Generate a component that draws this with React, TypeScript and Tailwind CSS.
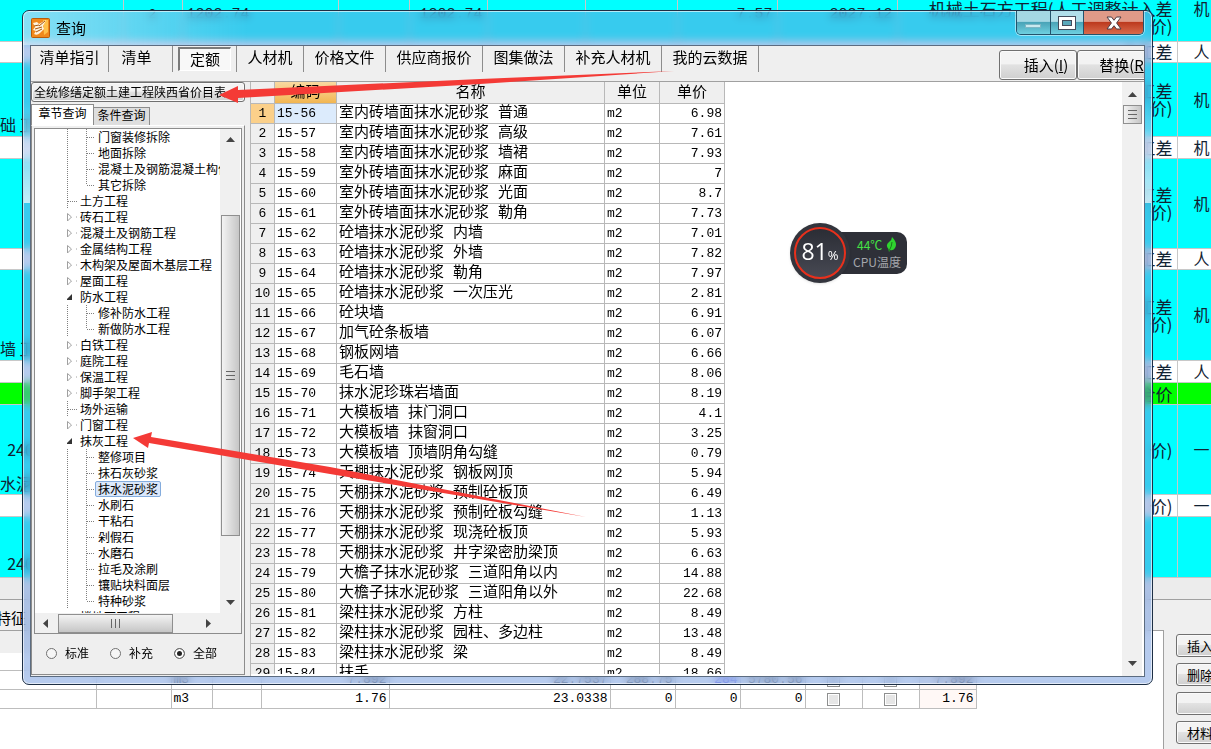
import { ReactNode } from "react";

interface GridRow {
  height: string;
  color: string;
  left?: string;
  note?: string;
  kind?: string;
}

const gridRows: GridRow[] = [
  { height: "h-[41px]", color: "bg-[#00ffff]", note: "机械土石方工程(人工调整计入差\n价)", kind: "机" },
  { height: "h-[21px]", color: "bg-white", note: "人工差", kind: "人" },
  { height: "h-[74px]", color: "bg-[#00ffff]", left: "\n\n\n础 卫", note: "人工差\n价)", kind: "机" },
  { height: "h-[22px]", color: "bg-white", note: "人工差", kind: "机" },
  { height: "h-[90px]", color: "bg-[#00ffff]", note: "人工差\n价)", kind: "机" },
  { height: "h-[21px]", color: "bg-white", note: "人工差", kind: "人" },
  { height: "h-[91px]", color: "bg-[#00ffff]", left: "\n\n\n\n墙 卫", note: "人工差\n价)", kind: "机" },
  { height: "h-[22px]", color: "bg-white", note: "人工差", kind: "人" },
  { height: "h-[22px]", color: "bg-[#00ff00]", note: "合价" },
  { height: "h-[90px]", color: "bg-[#00ffff]", left: "\n\n  240\n\n水泥砂浆", note: "价)", kind: "一" },
  { height: "h-[22px]", color: "bg-white", note: "价)", kind: "一" },
  { height: "h-[61px]", color: "bg-[#00ffff]", left: "\n\n  240" },
];

// only the first grid row shows above the dialog
const firstRow = ["2", "1202.74", "", "1202.74", "", "", "7.57", "2027.12"];

const quotas = [
  ["15-56", "室内砖墙面抹水泥砂浆 普通", "6.98"],
  ["15-57", "室内砖墙面抹水泥砂浆 高级", "7.61"],
  ["15-58", "室内砖墙面抹水泥砂浆 墙裙", "7.93"],
  ["15-59", "室外砖墙面抹水泥砂浆 麻面", "7"],
  ["15-60", "室外砖墙面抹水泥砂浆 光面", "8.7"],
  ["15-61", "室外砖墙面抹水泥砂浆 勒角", "7.73"],
  ["15-62", "砼墙抹水泥砂浆 内墙", "7.01"],
  ["15-63", "砼墙抹水泥砂浆 外墙", "7.82"],
  ["15-64", "砼墙抹水泥砂浆 勒角", "7.97"],
  ["15-65", "砼墙抹水泥砂浆 一次压光", "2.81"],
  ["15-66", "砼块墙", "6.91"],
  ["15-67", "加气砼条板墙", "6.07"],
  ["15-68", "钢板网墙", "6.66"],
  ["15-69", "毛石墙", "8.06"],
  ["15-70", "抹水泥珍珠岩墙面", "8.19"],
  ["15-71", "大模板墙 抹门洞口", "4.1"],
  ["15-72", "大模板墙 抹窗洞口", "3.25"],
  ["15-73", "大模板墙 顶墙阴角勾缝", "0.79"],
  ["15-74", "天棚抹水泥砂浆 钢板网顶", "5.94"],
  ["15-75", "天棚抹水泥砂浆 预制砼板顶", "6.49"],
  ["15-76", "天棚抹水泥砂浆 预制砼板勾缝", "1.13"],
  ["15-77", "天棚抹水泥砂浆 现浇砼板顶", "5.93"],
  ["15-78", "天棚抹水泥砂浆 井字梁密肋梁顶", "6.63"],
  ["15-79", "大檐子抹水泥砂浆 三道阳角以内", "14.88"],
  ["15-80", "大檐子抹水泥砂浆 三道阳角以外", "22.68"],
  ["15-81", "梁柱抹水泥砂浆 方柱", "8.49"],
  ["15-82", "梁柱抹水泥砂浆 园柱、多边柱", "13.48"],
  ["15-83", "梁柱抹水泥砂浆 梁", "8.49"],
  ["15-84", "扶手", "18.66"],
];

interface TreeItem {
  name: string;
  level: 1 | 2;
  state?: "open" | "closed";
  last?: boolean;
  selected?: boolean;
}

const tree: TreeItem[] = [
  { name: "门窗装修拆除", level: 2 },
  { name: "地面拆除", level: 2 },
  { name: "混凝土及钢筋混凝土构件拆除", level: 2 },
  { name: "其它拆除", level: 2, last: true },
  { name: "土方工程", level: 1 },
  { name: "砖石工程", level: 1, state: "closed" },
  { name: "混凝土及钢筋工程", level: 1, state: "closed" },
  { name: "金属结构工程", level: 1, state: "closed" },
  { name: "木构架及屋面木基层工程", level: 1, state: "closed" },
  { name: "屋面工程", level: 1, state: "closed" },
  { name: "防水工程", level: 1, state: "open" },
  { name: "修补防水工程", level: 2 },
  { name: "新做防水工程", level: 2, last: true },
  { name: "白铁工程", level: 1, state: "closed" },
  { name: "庭院工程", level: 1, state: "closed" },
  { name: "保温工程", level: 1, state: "closed" },
  { name: "脚手架工程", level: 1, state: "closed" },
  { name: "场外运输", level: 1 },
  { name: "门窗工程", level: 1, state: "closed" },
  { name: "抹灰工程", level: 1, state: "open" },
  { name: "整修项目", level: 2 },
  { name: "抹石灰砂浆", level: 2 },
  { name: "抹水泥砂浆", level: 2, selected: true },
  { name: "水刷石", level: 2 },
  { name: "干粘石", level: 2 },
  { name: "剁假石", level: 2 },
  { name: "水磨石", level: 2 },
  { name: "拉毛及涂刷", level: 2 },
  { name: "镶贴块料面层", level: 2 },
  { name: "特种砂浆", level: 2, last: true },
  { name: "楼地面工程", level: 1, state: "closed" },
];

const tabs = [
  { name: "清单指引", width: "w-[78px]" },
  { name: "清单", width: "w-16 pr-2" },
  { name: "定额", width: "w-16" },
  { name: "人材机", width: "w-[67px]" },
  { name: "价格文件", width: "w-[82px]" },
  { name: "供应商报价", width: "w-[97px]" },
  { name: "图集做法", width: "w-[82px]" },
  { name: "补充人材机", width: "w-[97px]" },
  { name: "我的云数据", width: "w-[97px]" },
];

const button3d =
  "border border-[#707070] rounded-[3px] bg-linear-to-b from-[#f3f3f3] from-45% via-[#e2e2e2] via-50% to-[#cfcfcf] shadow-[inset_0_0_0_1px_#fafafa]";

function Arrow({ dir }: { dir: "up" | "down" | "left" | "right" }) {
  const points = {
    up: "0,7 9,7 4.5,2",
    down: "0,2 9,2 4.5,7",
    left: "7,0 7,9 2,4.5",
    right: "2,0 2,9 7,4.5",
  };
  return (
    <svg width="9" height="9" viewBox="0 0 9 9">
      <polygon points={points[dir]} fill="#444" />
    </svg>
  );
}

function BackGrid() {
  return (
    <table className="w-full table-fixed border-collapse text-base leading-[17px] text-[#123]">
      <colgroup>
        <col className="w-[123px]" />
        <col className="w-[59px]" />
        <col className="w-[156px]" />
        <col className="w-[71px]" />
        <col className="w-[78px]" />
        <col className="w-[98px]" />
        <col className="w-[92px]" />
        <col className="w-[100px]" />
        <col className="w-[120px]" />
        <col />
        <col className="w-[34px]" />
      </colgroup>
      <tbody>
        {gridRows.map((row, i) => (
          <tr key={i} className={`${row.height} ${row.color}`}>
            <td className="p-0 border-b border-[#c8c8c8] whitespace-pre">{row.left}</td>
            {firstRow.map((text, c) => (
              <td
                key={c}
                className={`pb-0 px-1 border border-t-0 border-[#c8c8c8] align-top font-['Liberation_Mono',monospace] ${
                  i === 0 ? "pt-[6px]" : "pt-0"
                } ${c === 0 ? "text-[13px] text-center" : c === 1 ? "text-[15px] text-left" : "text-[15px] text-right"}`}
              >
                {i === 0 && text}
              </td>
            ))}
            <td
              className={`py-0 px-1 border border-t-0 border-[#c8c8c8] whitespace-pre text-right text-[17px] overflow-hidden ${
                i === 0 ? "align-top" : ""
              }`}
            >
              {row.note}
            </td>
            <td className={`p-0 pl-4 border-b border-[#c8c8c8] ${i === 0 ? "align-top" : ""}`}>{row.kind}</td>
          </tr>
        ))}
      </tbody>
    </table>
  );
}

function AmountTable() {
  const rows = [
    ["", "", "", "", "", "", "", "", "", ""],
    ["", "", "m3", "", "", "7.892", "22.7537", "288.75", "284", "5780.56", "7.892"],
    ["", "", "m3", "", "", "1.76", "23.0338", "0", "0", "0", "1.76"],
  ];
  return (
    <table className="w-[976px] table-fixed border-collapse font-['Liberation_Mono',monospace] text-[13px]">
      <colgroup>
        <col className="w-24" />
        <col className="w-[75px]" />
        <col className="w-[41px]" />
        <col className="w-[49px]" />
        <col className="w-[128px]" />
        <col className="w-[221px]" />
        <col className="w-[65px]" />
        <col className="w-[65px]" />
        <col className="w-[65px]" />
        <col className="w-[57px]" />
        <col className="w-[57px]" />
        <col className="w-[57px]" />
      </colgroup>
      <tbody>
        {rows.map((r, i) => (
          <tr key={i} className={`leading-[18px] ${i === 0 ? "h-[18px]" : "h-[19px]"}`}>
            {[r[0], r[1], r[2], r[3], r[5], r[6], r[7], r[8], r[9]].map((text, c) => (
              <td
                key={c}
                className={`py-0 px-[2px] border border-t-0 border-l-0 border-[#bdbdbd] ${c === 2 ? "" : "text-right"} ${
                  c === 7 && i === 1 ? "text-[#0000dd]" : ""
                }`}
              >
                {text}
              </td>
            ))}
            {[0, 1].map((c) => (
              <td key={c} className="p-0 border border-t-0 border-[#bdbdbd] text-center">
                {i > 0 && (
                  <input
                    type="checkbox"
                    aria-label="选择"
                    className="block mx-auto size-[13px] appearance-none border border-[#8e8f8f] bg-[#e6e6e6] shadow-[inset_0_0_0_1px_white]"
                  />
                )}
              </td>
            ))}
            <td className="py-0 px-[2px] border border-t-0 border-[#bdbdbd] bg-[#fff8f6] text-right">{r[10]}</td>
          </tr>
        ))}
      </tbody>
    </table>
  );
}

function Backdrop() {
  return (
    <div className="h-full flex flex-col overflow-hidden">
      <div className="shrink-0">
        <BackGrid />
      </div>
      <div className="shrink-0 h-[22px] bg-[#ececec] border-b border-[#a0a0a0]"></div>
      <div className="flex-1 min-h-0 flex">
        <div className="flex-1 min-w-0 flex flex-col">
          <div className="shrink-0 h-[31px] pt-2 flex items-center bg-[#efefef] border-b border-[#a0a0a0] text-[15px]">
            <span className="-ml-1">特征</span>
          </div>
          <div className="flex-1 min-h-0 bg-white border-r border-[#a0a0a0]">
            <div className="w-[120px] h-[22px] bg-[#efefef]"></div>
            <AmountTable />
          </div>
        </div>
        <div className="w-[47px] shrink-0 overflow-hidden bg-[#efefef] pl-3 pt-[34px] flex flex-col gap-[6px]">
          {["插入", "删除", "", "材料", "材料"].map((name, i) => (
            <button
              key={i}
              aria-label={name || "空"}
              className={`${button3d} w-[58px] h-[23px] shrink-0 pl-[10px] text-left text-[13px] leading-none whitespace-nowrap`}
            >
              {name}
            </button>
          ))}
        </div>
      </div>
    </div>
  );
}

function TitleBar() {
  return (
    <header className="h-[34px] shrink-0 flex items-start justify-between pl-2 bg-linear-to-r from-white/40 via-transparent via-20% to-transparent">
      <div className="flex items-center gap-[6px] pt-[7px]">
        <svg width="19" height="20" viewBox="0 0 19 20">
          <rect x="0.5" y="0.5" width="18" height="19" rx="1" fill="#f08a1c" stroke="#b85c0a" />
          <path d="M12 2 H17 V14 L13 17 Z" fill="#ffc14a" />
          <path d="M2 5 L6 4 L8 6 L15 2 L12 8 L13 11 L9 15 Q6 18 3 16 L5 13 L2 12 L4 9 Z" fill="#fff3dc" />
          <path d="M3 8 L8 7 M4 11 L11 9 M5 14 L11 11 M8 8 L14 3" stroke="#a9560c" strokeWidth="1" fill="none" />
        </svg>
        <h1 className="text-[15px] leading-5">查询</h1>
      </div>
      <div className="flex h-6 mr-2 rounded-b-[5px] border border-t-0 border-[#24536b] overflow-hidden shadow-[0_0_0_1px_#ffffff80]">
        <button
          aria-label="最小化"
          className="w-[34px] flex items-center justify-center border-r border-[#24536b] bg-linear-to-b from-[#a4d8e4] from-45% via-[#4aa4b8] via-50% to-[#6ed0e0]"
        >
          <svg width="17" height="12" viewBox="0 0 17 12">
            <rect x="0.5" y="7.5" width="15" height="3" fill="#c9e9ef" stroke="#7cb6c4" />
          </svg>
        </button>
        <button
          aria-label="最大化"
          className="w-[33px] flex items-center justify-center border-r border-[#24536b] bg-linear-to-b from-[#b0dfea] from-45% via-[#4aa4b8] via-50% to-[#6ed0e0]"
        >
          <svg width="18" height="14" viewBox="0 0 18 14">
            <rect x="0.5" y="0.5" width="17" height="13" fill="#fff" stroke="#444c5c" />
            <rect x="4.5" y="4.5" width="9" height="5" fill="#5aa9bc" stroke="#444c5c" />
          </svg>
        </button>
        <button
          aria-label="关闭"
          className="w-[59px] flex items-center justify-center bg-linear-to-b from-[#e09a88] from-45% via-[#bd3a1e] via-50% to-[#d8694a]"
        >
          <svg width="16" height="14" viewBox="0 0 16 14">
            <path
              d="M1 1 H5.5 L8 4.3 L10.5 1 H15 L10.6 7 L15 13 H10.5 L8 9.7 L5.5 13 H1 L5.4 7 Z"
              fill="#fff"
              stroke="#4c3c44"
            />
          </svg>
        </button>
      </div>
    </header>
  );
}

function Toolbar() {
  return (
    <div className="h-9 shrink-0 flex overflow-hidden bg-[#efefef] border-b border-[#a0a0a0]">
      <nav className="flex h-[26px] shrink-0 text-[15px]">
        {tabs.map((tab) => (
          <button
            key={tab.name}
            className={`${tab.width} flex items-center justify-center border-r border-[#8c8c8c] whitespace-nowrap`}
          >
            {tab.name === "定额" ? (
              <span className="w-[53px] h-6 bg-[#f8f8f8] border-2 border-r border-b border-[#7a7a7a] border-r-white border-b-white flex items-center justify-center">
                {tab.name}
              </span>
            ) : (
              <span className="pb-1">{tab.name}</span>
            )}
          </button>
        ))}
      </nav>
      <div className="ml-auto w-[145px] shrink-0 pt-1 flex overflow-hidden text-[15px]">
        <button className={`${button3d} w-[78px] h-[30px] shrink-0 pl-4 whitespace-nowrap`}>
          插入(<u>I</u>)
        </button>
        <button className={`${button3d} w-[90px] h-[30px] shrink-0 pl-1 whitespace-nowrap`}>
          替换(<u>R</u>)
        </button>
      </div>
    </div>
  );
}

function TreeRow({ item }: { item: TreeItem }) {
  return (
    <li className="h-4 flex items-center pl-8 whitespace-nowrap">
      {item.level === 1 ? (
        <svg width="12" height="16" viewBox="0 0 12 16" className="shrink-0">
          {!item.state && <path d="M0.5 0 V16 M1 8.5 H10" stroke="#808080" strokeDasharray="1 1" />}
          {item.state === "closed" && <path d="M0.5 4.5 L4.5 8 L0.5 12 Z M9 8 h1" fill="white" stroke="#a0a0a0" />}
          {item.state === "open" && <path d="M-1 11 L5 5 V11 Z" fill="#333" />}
        </svg>
      ) : (
        <svg width="28" height="16" viewBox="0 0 28 16" className="shrink-0">
          <path
            d={`M0.5 0 V16 M19.5 0 V${item.last ? 8 : 16} M20 8.5 H28`}
            stroke="#808080"
            strokeDasharray="1 1"
            fill="none"
          />
        </svg>
      )}
      <button
        className={`h-4 leading-[14px] border rounded-[2px] ${item.level === 1 ? "" : "px-[2px]"} ${
          item.selected ? "border-[#84acdd] bg-[#dbe8fb]" : "border-transparent"
        }`}
      >
        {item.name}
      </button>
    </li>
  );
}

function SidePanel() {
  return (
    <aside className="w-[214px] shrink-0 flex flex-col bg-[#efefef] text-xs">
      <div className="relative h-[21px] shrink-0">
        <select
          aria-label="定额库"
          className={`${button3d} w-full h-5 appearance-none pl-[2px] text-xs leading-none text-black`}
        >
          <option>全统修缮定额土建工程陕西省价目表</option>
        </select>
        <span className="absolute right-1 top-[6px]">
          <Arrow dir="down" />
        </span>
      </div>
      <div className="flex items-end h-[22px] shrink-0">
        <button className="w-[63px] h-[21px] pb-1 leading-4 bg-white border border-b-0 border-[#8c8c8c]">章节查询</button>
        <button className="w-14 h-[18px] pb-1 leading-[13px] bg-[#dedede] border border-b-0 border-l-0 border-[#8c8c8c]">
          条件查询
        </button>
      </div>
      <div className="flex-1 min-h-0 flex flex-col border border-[#8c8c8c] border-t-white p-[2px] mb-[1px]">
        <div className="flex-1 min-h-0 flex flex-col bg-white border border-[#8c8c8c]">
          <div className="flex-1 min-h-0 flex">
            <ul className="flex-1 min-w-0 overflow-hidden">
              {tree.map((item) => (
                <TreeRow key={item.name} item={item} />
              ))}
            </ul>
            <div className="w-5 shrink-0 flex flex-col items-center bg-[#f0f0f0] pt-[6px] pb-[6px] mr-[1px]">
              <Arrow dir="up" />
              <div className="w-[19px] h-[68%] mt-[71px] flex flex-col items-center justify-center gap-[3px] border border-[#8f8f8f] bg-linear-to-r from-[#f3f3f3] to-[#c6c6c6]">
                <Grip />
              </div>
              <span className="mt-auto">
                <Arrow dir="down" />
              </span>
            </div>
          </div>
          <div className="h-5 shrink-0 flex items-center bg-[#f0f0f0] pl-[6px] pr-7">
            <Arrow dir="left" />
            <div className="w-[115px] h-[19px] ml-2 flex items-center justify-center border border-[#8f8f8f] bg-linear-to-b from-[#f3f3f3] to-[#c6c6c6]">
              <span className="rotate-90 flex flex-col gap-[3px]">
                <Grip />
              </span>
            </div>
            <span className="ml-auto">
              <Arrow dir="right" />
            </span>
          </div>
        </div>
        <div className="h-[38px] shrink-0 flex items-center gap-5 pl-3">
          {["标准", "补充", "全部"].map((name) => (
            <label key={name} className="flex items-center gap-2 w-11 whitespace-nowrap">
              <input
                type="radio"
                name="scope"
                defaultChecked={name === "全部"}
                className="size-[11px] shrink-0 appearance-none rounded-full border border-[#707070] bg-[#f6f6f6] checked:bg-[#222] checked:shadow-[inset_0_0_0_2px_white]"
              />
              {name}
            </label>
          ))}
        </div>
      </div>
    </aside>
  );
}

function Grip() {
  return (
    <>
      <i className="block w-[9px] h-px bg-[#666]"></i>
      <i className="block w-[9px] h-px bg-[#666]"></i>
      <i className="block w-[9px] h-px bg-[#666]"></i>
    </>
  );
}

function Th({ children, className = "" }: { children?: ReactNode; className?: string }) {
  return <th className={`p-0 pt-[2px] font-normal border-r border-b border-[#b8b8b8] ${className}`}>{children}</th>;
}

function QuotaTable() {
  return (
    <table className="w-[474px] table-fixed border-separate border-spacing-0 font-['Liberation_Mono','Noto_Sans_CJK_SC',monospace] text-[15px]">
      <colgroup>
        <col className="w-6" />
        <col className="w-[62px]" />
        <col className="w-[268px]" />
        <col className="w-[55px]" />
        <col className="w-[65px]" />
      </colgroup>
      <thead>
        <tr className="h-[22px] leading-[19px] bg-[#efefef]">
          <Th />
          <Th className="bg-linear-to-b from-[#f9d9a0] to-[#f2b650]">编码</Th>
          <Th>名称</Th>
          <Th>单位</Th>
          <Th>单价</Th>
        </tr>
      </thead>
      <tbody>
        {quotas.map(([code, name, price], i) => (
          <tr key={code} className="h-5 leading-[19px]">
            <td
              className={`p-0 text-center text-[13px] border-r border-b border-[#b8b8b8] ${
                i === 0 ? "bg-[#fbd08a]" : "bg-[#efefef]"
              }`}
            >
              {i + 1}
            </td>
            <td className={`p-0 pl-[2px] text-[13px] border-r border-b border-[#b8b8b8] ${i === 0 ? "bg-[#dcebfc]" : ""}`}>
              {code}
            </td>
            <td className="p-0 pl-[2px] border-r border-b border-[#b8b8b8] whitespace-nowrap">{name}</td>
            <td className="p-0 pl-[2px] text-[13px] border-r border-b border-[#b8b8b8]">m2</td>
            <td className="p-0 pr-[2px] text-[13px] text-right border-r border-b border-[#b8b8b8]">{price}</td>
          </tr>
        ))}
      </tbody>
    </table>
  );
}

function QueryDialog() {
  return (
    <section
      aria-label="查询"
      className="absolute left-[22px] right-[58px] top-[10px] bottom-[64px] flex flex-col rounded-[7px] border border-[#1d2f45] bg-[#6e97dd]/50 backdrop-blur-xs shadow-[inset_0_0_0_1px_#ffffffa0] overflow-hidden"
    >
      {/* glass reflection along both side edges */}
      <div className="absolute left-[1px] top-[90px] w-[6px] h-[102px] bg-linear-to-b from-transparent to-white/70"></div>
      <div className="absolute right-[1px] top-[90px] w-[6px] h-[102px] bg-linear-to-b from-transparent to-white/70"></div>
      <TitleBar />
      <div className="flex-1 min-h-0 mx-[7px] mb-[7px] flex flex-col border border-[#5c6c80] bg-white overflow-hidden">
        <Toolbar />
        <div className="flex-1 min-h-0 flex">
          <SidePanel />
          <div className="w-[6px] shrink-0 bg-[#efefef] border-r border-[#b8b8b8]"></div>
          <div className="flex-1 min-w-0 overflow-hidden mb-[2px]">
            <QuotaTable />
          </div>
          <div className="w-5 mr-[2px] shrink-0 flex flex-col items-center bg-[#f0f0f0] pt-2 pb-2">
            <Arrow dir="up" />
            <div className="w-[19px] h-[19px] mt-[6px] flex flex-col items-center justify-center gap-[3px] border border-[#8f8f8f] bg-linear-to-r from-[#f3f3f3] to-[#c6c6c6]">
              <Grip />
            </div>
            <span className="mt-auto">
              <Arrow dir="down" />
            </span>
          </div>
        </div>
      </div>
    </section>
  );
}

function CpuWidget() {
  return (
    <div className="absolute left-[790px] top-[223px] flex items-center">
      <div className="z-10 size-[60px] rounded-full bg-[#33353d] p-1 shadow">
        <div className="size-full rounded-full border-2 border-[#e8301c] bg-linear-to-b from-[#2b2d35] to-[#474953] flex items-baseline justify-center pt-[6px] font-['Open_Sans',sans-serif] text-white">
          <span className="text-[23px] leading-8">81</span>
          <span className="text-[13px]">%</span>
        </div>
      </div>
      <div className="-ml-5 w-[77px] h-[42px] rounded-[10px] bg-[#2e3038] pl-[23px] pt-1 text-xs leading-[17px] whitespace-nowrap">
        <div className="flex items-center gap-1 pl-1 text-[#45e045]">
          44℃
          <svg width="11" height="15" viewBox="0 0 11 15">
            <path d="M6 0 Q12 6 9 11 Q7 14 4 13 L3 15 L2.5 12 Q-1 8 3 5 Q6 3 6 0 Z" fill="#2fd52f" />
            <path d="M6 5 Q6 9 3 14" stroke="#1a7a1a" fill="none" />
          </svg>
        </div>
        <div className="text-[#a4a6ac]">CPU温度</div>
      </div>
    </div>
  );
}

function App() {
  return (
    <main className="relative h-screen overflow-hidden bg-[#efefef] font-['Noto_Sans_CJK_SC',sans-serif] text-black">
      <Backdrop />
      <QueryDialog />
      <CpuWidget />
      <svg className="absolute left-0 top-0 pointer-events-none" width="700" height="530" viewBox="0 0 700 530">
        <g fill="#f43a36">
          <polygon points="219,95 238,86 238,90 480,79 674,71 480,84 238,98 238,103" />
          <polygon points="133,438 152,432 151,437 330,467 586,517 330,474 149,443 148,448" />
        </g>
      </svg>
    </main>
  );
}

export default App;
